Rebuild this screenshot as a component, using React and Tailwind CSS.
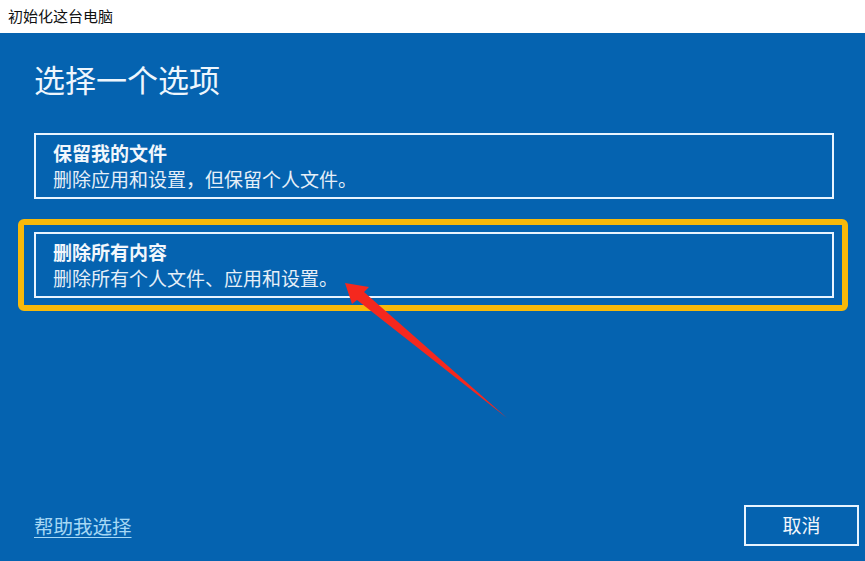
import React from 'react';

const font = { fontFamily: '"Noto Sans CJK SC", "Noto Sans", sans-serif' };

const OptionCard = ({ title, desc }) => (
    <div className="h-[66px] border-2 border-[#e8f4ff] pl-[17px] flex flex-col justify-center">
        <div className="text-[19px] leading-[26px] font-bold text-[#f2f7fc]">{title}</div>
        <div className="text-[19px] leading-[26px] text-[#e6eff8]">{desc}</div>
    </div>
);

const App = () => {
    return (
        <div className="relative w-[865px] h-[561px] overflow-hidden flex flex-col" style={font}>
            {/* Title bar */}
            <div className="h-[33px] bg-white flex items-center pl-[8px] text-[15px] text-[#111]">
                初始化这台电脑
            </div>

            {/* Blue body */}
            <div className="flex-1 bg-[#0563b0] flex flex-col pl-[34px] pr-[31px]">
                <h1 className="mt-[26px] text-[31px] leading-[40px] text-[#eef6fd] font-normal">选择一个选项</h1>

                <div className="mt-[34px]">
                    <OptionCard title="保留我的文件" desc="删除应用和设置，但保留个人文件。" />
                </div>

                {/* highlighted option */}
                <div className="mt-[20px] -ml-[16px] -mr-[14px] border-[6px] border-[#f7b90a] rounded-[6px] pl-[10px] pr-[8px] py-[7px]">
                    <OptionCard title="删除所有内容" desc="删除所有个人文件、应用和设置。" />
                </div>

                <div className="flex-1" />

                {/* Footer */}
                <div className="flex items-center justify-between mb-[15px] -mr-[25px]">
                    <a href="#" className="text-[19.5px] leading-[26px] text-[#a6d8f5] underline underline-offset-[3px]">
                        帮助我选择
                    </a>
                    <button className="w-[115px] h-[41px] border-2 border-[#e8f4ff] text-[19px] text-[#f2f7fc] flex items-center justify-center">
                        取消
                    </button>
                </div>
            </div>

            {/* Red annotation arrow */}
            <svg className="absolute inset-0 pointer-events-none" width="865" height="561" viewBox="0 0 865 561">
                <polygon
                    points="345,283 369,287 364,292 507,418 357,300 352,304"
                    fill="#f5281e"
                />
            </svg>
        </div>
    );
};

export default App;
